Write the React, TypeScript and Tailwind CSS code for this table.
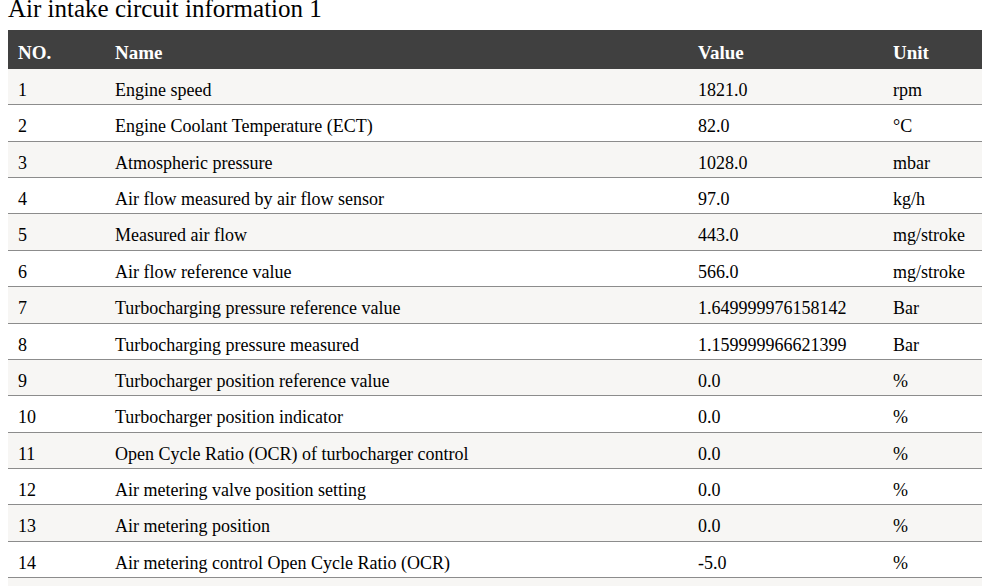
const rows: [string, string, string][] = [
  ["Engine speed", "1821.0", "rpm"],
  ["Engine Coolant Temperature (ECT)", "82.0", "°C"],
  ["Atmospheric pressure", "1028.0", "mbar"],
  ["Air flow measured by air flow sensor", "97.0", "kg/h"],
  ["Measured air flow", "443.0", "mg/stroke"],
  ["Air flow reference value", "566.0", "mg/stroke"],
  ["Turbocharging pressure reference value", "1.649999976158142", "Bar"],
  ["Turbocharging pressure measured", "1.159999966621399", "Bar"],
  ["Turbocharger position reference value", "0.0", "%"],
  ["Turbocharger position indicator", "0.0", "%"],
  ["Open Cycle Ratio (OCR) of turbocharger control", "0.0", "%"],
  ["Air metering valve position setting", "0.0", "%"],
  ["Air metering position", "0.0", "%"],
  ["Air metering control Open Cycle Ratio (OCR)", "-5.0", "%"],
];

export default function App() {
  return (
    <div className="h-[586px] overflow-hidden bg-white px-2 font-[family-name:'Liberation_Serif','Times_New_Roman',serif] text-black">
      <h2 className="-mt-[6px] mb-[6px] text-[25px] leading-[30px] font-normal">
        Air intake circuit information 1
      </h2>
      <div className="w-[974px]">
        <div className="flex h-[39px] bg-[#404040] pt-[12px] text-[19px] leading-[22px] font-bold text-white">
          <div className="w-[97px] px-[10px]">NO.</div>
          <div className="w-[583px] px-[10px]">Name</div>
          <div className="w-[195px] px-[10px]">Value</div>
          <div className="w-[99px] px-[10px]">Unit</div>
        </div>
        {rows.map(([name, value, unit], i) => (
          <div
            key={i}
            className={`flex h-[36.36px] border-b border-[#8c8c8c] pt-[11px] text-[18px] leading-[21px] ${
              i % 2 === 0 ? "bg-[#f7f6f4]" : "bg-white"
            }`}
          >
            <div className="w-[97px] px-[10px]">{i + 1}</div>
            <div className="w-[583px] px-[10px] whitespace-nowrap">{name}</div>
            <div className="w-[195px] px-[10px]">{value}</div>
            <div className="w-[99px] px-[10px] whitespace-nowrap">{unit}</div>
          </div>
        ))}
        <div className="h-[36px] bg-[#f7f6f4]" />
      </div>
    </div>
  );
}
